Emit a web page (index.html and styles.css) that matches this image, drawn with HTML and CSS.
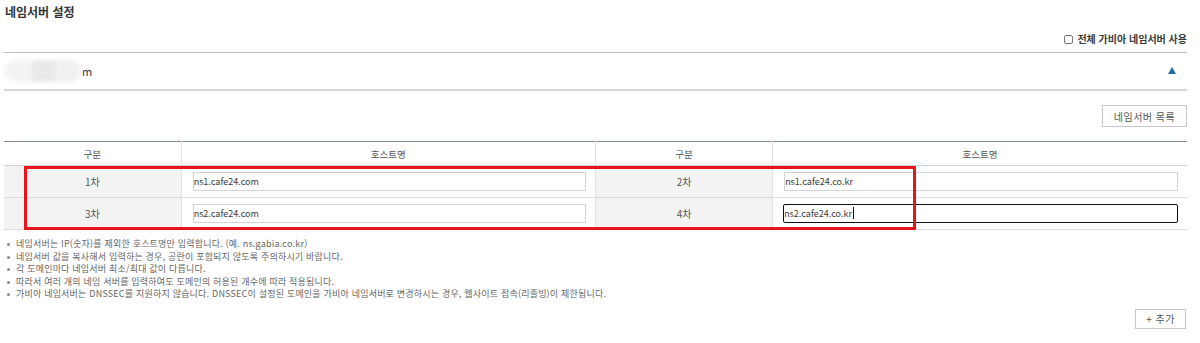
FILE: index.html
```html
<!DOCTYPE html>
<html lang="ko">
<head>
<meta charset="utf-8">
<title>네임서버 설정</title>
<link rel="stylesheet" href="styles.css">
</head>
<body>
<div class="page">
  <h2 class="title">네임서버 설정</h2>
  <div class="options">
    <label class="check"><span class="box"></span>전체 가비아 네임서버 사용</label>
  </div>
  <div class="domain-bar">
    <div class="domain"><span class="blur"></span><span class="tail">m</span></div>
    <span class="toggle"></span>
  </div>
  <div class="toolbar">
    <button class="btn">네임서버 목록</button>
  </div>
  <div class="table-wrap">
    <table class="ns-table">
      <colgroup>
        <col class="c-label"><col class="c-host"><col class="c-label"><col class="c-host">
      </colgroup>
      <thead>
        <tr><th>구분</th><th>호스트명</th><th>구분</th><th>호스트명</th></tr>
      </thead>
      <tbody>
        <tr>
          <td class="lbl">1차</td>
          <td class="host"><input class="inp" type="text" value="ns1.cafe24.com"></td>
          <td class="lbl">2차</td>
          <td class="host"><input class="inp" type="text" value="ns1.cafe24.co.kr"></td>
        </tr>
        <tr>
          <td class="lbl">3차</td>
          <td class="host"><input class="inp" type="text" value="ns2.cafe24.com"></td>
          <td class="lbl">4차</td>
          <td class="host"><div class="inp focus">ns2.cafe24.co.kr<span class="caret"></span></div></td>
        </tr>
      </tbody>
    </table>
    <div class="highlight"></div>
  </div>
  <ul class="notes">
    <li>네임서버는 IP(숫자)를 제외한 호스트명만 입력합니다. (예. ns.gabia.co.kr)</li>
    <li>네임서버 값을 복사해서 입력하는 경우, 공란이 포함되지 않도록 주의하시기 바랍니다.</li>
    <li>각 도메인마다 네임서버 최소/최대 값이 다릅니다.</li>
    <li>따라서 여러 개의 네임 서버를 입력하여도 도메인의 허용된 개수에 따라 적용됩니다.</li>
    <li>가비아 네임서버는 DNSSEC를 지원하지 않습니다. DNSSEC이 설정된 도메인을 가비아 네임서버로 변경하시는 경우, 웹사이트 접속(리졸빙)이 제한됩니다.</li>
  </ul>
  <div class="add-row">
    <button class="btn btn-sm">+ 추가</button>
  </div>
</div>
</body>
</html>
```

FILE: styles.css
```css
* { box-sizing: border-box; }
html, body { margin: 0; padding: 0; background: #fff; }
body {
  font-family: "Noto Sans CJK KR", "Noto Sans", sans-serif;
  color: #333;
  width: 1200px;
  height: 343px;
  overflow: hidden;
}
.page { padding: 0 13px 0 4px; }

.title {
  margin: 0;
  padding: 5px 0 0 1px;
  font-size: 12px;
  line-height: 14px;
  font-weight: 700;
  color: #333;
}

.options {
  height: 33px;
  display: flex;
  justify-content: flex-end;
  align-items: flex-end;
  padding-bottom: 7px;
}
.check {
  display: flex;
  align-items: center;
  font-size: 10px;
  line-height: 12px;
  font-weight: 700;
  color: #3a3a3a;
}
.box {
  width: 9px;
  height: 9px;
  border: 1px solid #777;
  border-radius: 2px;
  margin-right: 4px;
  background: #fff;
}

.domain-bar {
  height: 39px;
  border-top: 1px solid #b8c0c6;
  border-bottom: 2px solid #d6d6d6;
  display: flex;
  align-items: center;
  justify-content: space-between;
  padding: 0 11px 0 1px;
}
.domain { display: flex; align-items: center; }
.blur {
  width: 76px;
  height: 22px;
  border-radius: 11px;
  background: linear-gradient(90deg, #f3f3f3 0%, #f3f3f3 35%, #e9e9e9 36%, #e9e9e9 65%, #f0f0f0 66%);
  filter: blur(2px);
}
.tail { font-size: 11px; color: #333; margin-left: 1px; }
.toggle {
  width: 0;
  height: 0;
  border-left: 4.5px solid transparent;
  border-right: 4.5px solid transparent;
  border-bottom: 7px solid #1d6fa5;
  margin-top: -2px;
}

.toolbar {
  display: flex;
  justify-content: flex-end;
  padding: 14px 0;
}
.btn {
  font-family: "Noto Sans CJK KR", "Noto Sans", sans-serif;
  height: 22px;
  padding: 0;
  border: 1px solid #c8c8c8;
  background: #fff;
  color: #555;
  font-size: 10px;
  letter-spacing: 0.5px;
  white-space: nowrap;
  cursor: pointer;
  width: 85px;
}
.btn-sm { width: 51px; height: 20px; }

.table-wrap { position: relative; }
.ns-table {
  width: 1183px;
  border-collapse: collapse;
  table-layout: fixed;
  border-top: 1px solid #7f8d97;
}
.c-label { width: 177px; }
.c-host { width: 414px; }
.ns-table th {
  height: 24px;
  font-size: 9.5px;
  font-weight: 400;
  color: #555;
  text-align: center;
  border-bottom: 1px solid #cfd4d8;
  border-left: 1px solid #e2e2e2;
  padding: 0;
}
.ns-table th:first-child, .ns-table td:first-child { border-left: none; }
.ns-table td {
  height: 32px;
  border-bottom: 1px solid #dcdcdc;
  border-left: 1px solid #e2e2e2;
  padding: 0;
  font-size: 10px;
}
.ns-table .lbl { background: #f3f3f3; text-align: center; color: #555; }
.ns-table .host { padding: 0 9px 0 11px; }
.inp {
  display: block;
  width: 100%;
  height: 19px;
  border: 1px solid #d4d4d4;
  padding: 0;
  font-family: "Noto Sans CJK KR", "Noto Sans", sans-serif;
  font-size: 9px;
  line-height: 17px;
  color: #3a3a3a;
  background: #fff;
  outline: none;
}
.inp.focus {
  border: 1px solid #111;
  border-radius: 2px;
  margin-left: -1px;
  width: calc(100% + 1px);
}
.caret {
  display: inline-block;
  width: 1px;
  height: 12px;
  background: #111;
  vertical-align: -2px;
  margin-left: 1px;
}

.highlight {
  position: absolute;
  left: 20px;
  top: 25px;
  width: 892px;
  height: 64px;
  border: 3px solid #e8141b;
  pointer-events: none;
}

.notes {
  list-style: none;
  margin: 8px 0 0 0;
  padding: 0;
}
.notes li {
  position: relative;
  padding-left: 12px;
  font-size: 9px;
  line-height: 12.6px;
  letter-spacing: 0.2px;
  color: #666;
  white-space: nowrap;
}
.notes li::before {
  content: "";
  position: absolute;
  left: 3px;
  top: 5px;
  width: 3px;
  height: 3px;
  border-radius: 50%;
  background: #888;
}

.add-row {
  display: flex;
  justify-content: flex-end;
  padding-right: 1px;
  margin-top: 8px;
}
```
